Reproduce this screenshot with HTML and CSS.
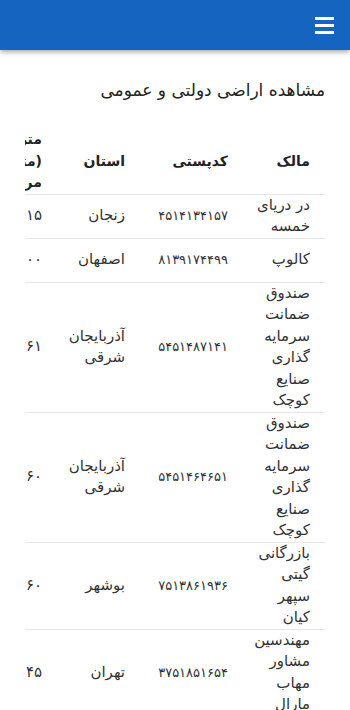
FILE: index.html
```html
<!DOCTYPE html>
<html lang="fa" dir="rtl">
<head>
    <meta charset="UTF-8">
    <meta name="viewport" content="width=device-width, initial-scale=1.0">
    <title>مشاهده اراضی دولتی و عمومی</title>
    <link rel="stylesheet" href="styles.css">
</head>
<body>
    <div class="navbar">
        <div class="menu-btn">
            <span></span>
            <span></span>
            <span></span>
        </div>
    </div>

    <div class="content">
        <h1>مشاهده اراضی دولتی و عمومی</h1>

        <div class="table-wrap">
            <table>
                <colgroup>
                    <col class="col-owner">
                    <col class="col-postal">
                    <col class="col-province">
                    <col class="col-area">
                    <col class="col-usage">
                    <col class="col-address">
                </colgroup>
                <thead>
                    <tr>
                        <th class="owner">مالک</th>
                        <th>کدپستی</th>
                        <th>استان</th>
                        <th>متراژ (متر مربع)</th>
                        <th>کاربری</th>
                        <th>آدرس</th>
                    </tr>
                </thead>
                <tbody>
                    <tr>
                        <td class="owner">در دریای خمسه</td>
                        <td class="code">۴۵۱۴۱۳۴۱۵۷</td>
                        <td>زنجان</td>
                        <td>۱۵</td>
                        <td>مسکونی</td>
                        <td>زنجان</td>
                    </tr>
                    <tr>
                        <td class="owner">کالوپ</td>
                        <td class="code">۸۱۳۹۱۷۴۴۹۹</td>
                        <td>اصفهان</td>
                        <td>۵۰۰۰</td>
                        <td>صنعتی</td>
                        <td>اصفهان</td>
                    </tr>
                    <tr>
                        <td class="owner">صندوق ضمانت سرمایه گذاری صنایع کوچک</td>
                        <td class="code">۵۴۵۱۴۸۷۱۴۱</td>
                        <td>آذربایجان شرقی</td>
                        <td>۱۲۶۱</td>
                        <td>صنعتی</td>
                        <td>تبریز</td>
                    </tr>
                    <tr>
                        <td class="owner">صندوق ضمانت سرمایه گذاری صنایع کوچک</td>
                        <td class="code">۵۴۵۱۴۶۴۶۵۱</td>
                        <td>آذربایجان شرقی</td>
                        <td>۱۲۶۰</td>
                        <td>صنعتی</td>
                        <td>تبریز</td>
                    </tr>
                    <tr>
                        <td class="owner">بازرگانی گیتی سپهر کیان</td>
                        <td class="code">۷۵۱۳۸۶۱۹۳۶</td>
                        <td>بوشهر</td>
                        <td>۶۰</td>
                        <td>تجاری</td>
                        <td>بوشهر</td>
                    </tr>
                    <tr>
                        <td class="owner">مهندسین مشاور مهاب مارال</td>
                        <td class="code">۳۷۵۱۸۵۱۶۵۴</td>
                        <td>تهران</td>
                        <td>۴۵</td>
                        <td>اداری</td>
                        <td>تهران</td>
                    </tr>
                </tbody>
            </table>
        </div>
    </div>
</body>
</html>
```

FILE: styles.css
```css
body {
    margin: 0;
    font-family: "DejaVu Sans", sans-serif;
    direction: rtl;
    color: #333;
    background-color: #fff;
}
.navbar {
    height: 50px;
    background-color: #1565c0;
    box-shadow: 0 2px 5px rgba(0,0,0,0.35);
    display: flex;
    align-items: center;
    padding: 0 16px;
}
.menu-btn {
    width: 19px;
    display: flex;
    flex-direction: column;
    gap: 4px;
}
.menu-btn span {
    display: block;
    height: 3px;
    background-color: #fff;
}
.content {
    padding: 25px 25px 0;
}
h1 {
    font-size: 17px;
    font-weight: normal;
    line-height: 30px;
    color: #222;
    margin: 0 0 24px;
}
.table-wrap {
    overflow-x: auto;
}
table {
    border-collapse: collapse;
    table-layout: fixed;
    width: 568px;
}
.col-owner { width: 82px; }
.col-postal { width: 103px; }
.col-province { width: 83px; }
.col-area { width: 60px; }
.col-usage { width: 90px; }
.col-address { width: 150px; }
th, td {
    padding: 0 15px 0 0;
    text-align: right;
    vertical-align: middle;
    border-bottom: 1px solid #e6e6e6;
    font-size: 15px;
    line-height: 21.5px;
}
th {
    font-size: 14px;
    font-weight: bold;
    color: #222;
}
td {
    height: 43px;
}
.owner {
    padding-left: 13px;
}
.code {
    font-size: 13px;
}
```
